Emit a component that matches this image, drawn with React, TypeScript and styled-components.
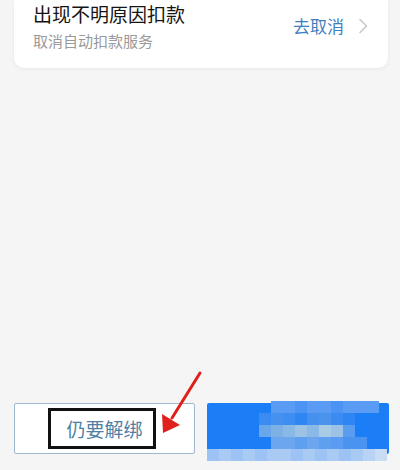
import React from "react";
import styled, { createGlobalStyle } from "styled-components";

const Global = createGlobalStyle`
  html, body { margin: 0; padding: 0; background: #f5f5f5; }
  body { font-family: "Noto Sans CJK SC", "Noto Sans", sans-serif; }
`;

const Page = styled.div`
  width: 400px;
  height: 470px;
  position: relative;
  overflow: hidden;
  background: #f5f5f5;
  display: flex;
  flex-direction: column;
  justify-content: space-between;
`;

const Card = styled.div`
  margin: 0 12px 0 14px;
  height: 68px;
  background: #fff;
  border-radius: 0 0 10px 10px;
  box-shadow: 0 1px 4px rgba(0, 0, 0, 0.06);
  display: flex;
  align-items: flex-start;
  padding: 0 20px 0 19px;
  box-sizing: border-box;
`;

const TextCol = styled.div`
  flex: 1;
  display: flex;
  flex-direction: column;
  padding-top: 2px;
`;

const Title = styled.div`
  font-size: 19px;
  line-height: 24px;
  color: #151515;
`;

const Sub = styled.div`
  font-size: 15px;
  line-height: 20px;
  margin-top: 5px;
  color: #9a9a9a;
`;

const Action = styled.div`
  display: flex;
  align-items: center;
  gap: 14px;
  font-size: 17px;
  line-height: 24px;
  color: #3f7fc0;
  margin-top: 14px;
`;

const Footer = styled.div`
  display: flex;
  gap: 12px;
  padding: 0 11px 16px 14px;
  position: relative;
`;

const GhostButton = styled.div`
  width: 181px;
  height: 51px;
  box-sizing: border-box;
  border: 1px solid #9fb8cf;
  border-radius: 2px;
  background: #fff;
  display: flex;
  align-items: center;
  justify-content: center;
  position: relative;
  font-size: 19px;
  color: #4f7fa5;
`;

const Highlight = styled.div`
  position: absolute;
  left: 33px;
  top: 4px;
  width: 108px;
  height: 41px;
  box-sizing: border-box;
  border: 3px solid #111;
`;

const PrimaryButton = styled.div`
  width: 182px;
  height: 51px;
  background: #1c7ef6;
  border-radius: 2px;
  position: relative;
`;

const Cell = styled.div<{ $c: string }>`
  position: absolute;
  width: 12px;
  height: 12px;
  background: ${(p) => p.$c};
`;

const ArrowSvg = styled.svg`
  position: absolute;
  left: 0;
  top: 0;
  pointer-events: none;
`;

const cells: [number, number, string][] = [];
const rows: { y: number; x0: number; colors: string[] }[] = [
  { y: -2, x0: 64, colors: ["#5a9cf3", "#5a9cf3", "#4b94f3", "#5a9cf3", "#5a9cf3", "#4b94f3", "#5a9cf3", "#5a9cf3", "#5a9cf3"] },
  { y: 10, x0: 52, colors: ["#3a8cf2", "#4690ee", "#3d8ef2", "#2e86f3", "#4690ee", "#4a94ee", "#3a8cf2", "#2e86f3"] },
  { y: 22, x0: 52, colors: ["#6aa6ea", "#7db1e6", "#8bb9e6", "#9cc3e6", "#8bb9e6", "#a8cbe6", "#9cc3e6", "#5a9cf0"] },
  { y: 34, x0: 64, colors: ["#6ba6ee", "#6ba6ee", "#5e9ff0", "#6ba6ee", "#5e9ff0", "#5a9cf3", "#4a94f0", "#4a94f0"] },
  { y: 46, x0: 0, colors: ["#9cc3f3", "#a8caf3", "#9cc3f3", "#a8caf3", "#9cc3f3", "#a8caf3", "#a8caf3", "#9cc3f3", "#a8caf3", "#9cc3f3", "#a8caf3", "#9cc3f3", "#a8caf3", "#b8d3f3", "#c8dcf3"] },
];
rows.forEach((r) => r.colors.forEach((c, i) => cells.push([r.x0 + i * 12, r.y, c])));

export default function App() {
  return (
    <>
      <Global />
      <Page>
        <Card>
          <TextCol>
            <Title>出现不明原因扣款</Title>
            <Sub>取消自动扣款服务</Sub>
          </TextCol>
          <Action>
            <span>去取消</span>
            <svg width="10" height="16" viewBox="0 0 10 16">
              <path d="M2 1.5 L8.5 8 L2 14.5" fill="none" stroke="#c8c8c8" strokeWidth="1.6" strokeLinecap="round" strokeLinejoin="round" />
            </svg>
          </Action>
        </Card>
        <Footer>
          <GhostButton>
            仍要解绑
            <Highlight />
          </GhostButton>
          <PrimaryButton>
            {cells.map(([x, y, c], i) => (
              <Cell key={i} $c={c} style={{ left: x, top: y }} />
            ))}
          </PrimaryButton>
        </Footer>
        <ArrowSvg width="400" height="470" viewBox="0 0 400 470">
          <line x1="200" y1="373" x2="172" y2="418" stroke="#e0201c" strokeWidth="3" strokeLinecap="round" />
          <polygon points="163,433 162,414 180,425" fill="#e0201c" />
        </ArrowSvg>
      </Page>
    </>
  );
}
